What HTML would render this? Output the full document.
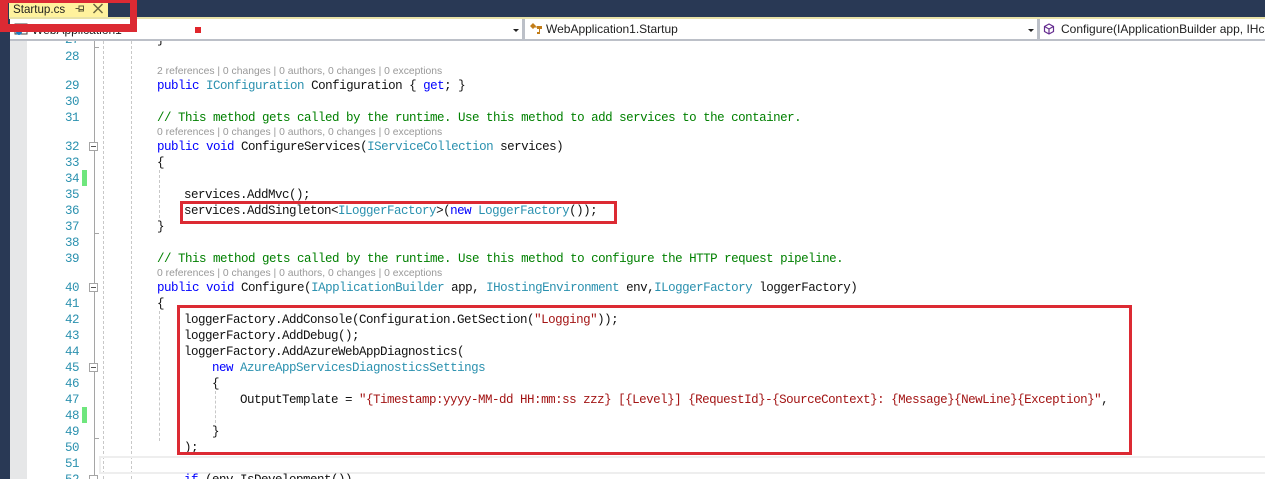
<!DOCTYPE html>
<html><head><meta charset="utf-8">
<style>
html,body{margin:0;padding:0;background:#fff}
#p{position:relative;width:1265px;height:479px;overflow:hidden;background:#fff;font-family:"Liberation Sans",sans-serif}
#p div{position:absolute}
.c{left:0;margin-top:1px;font:12.5px/16px "Liberation Mono",monospace;letter-spacing:-.5px;white-space:pre;color:#111;height:16px}
.n{left:40px;margin-top:1px;width:39px;text-align:right;font:12.5px/16px "Liberation Mono",monospace;letter-spacing:-.5px;color:#2b91af;height:16px}
.l{left:157px;margin-top:1px;font:10.35px/12px "Liberation Sans",sans-serif;color:#999;white-space:pre}
.k{color:#0000ff}.t{color:#2b91af}.g{color:#008000}.s{color:#a31515}
.v{width:0;border-left:1px dashed #c8c8c8}
.r{border:3px solid #dc2a33;box-sizing:border-box}
.f{width:9px;height:9px;left:89px;border:1px solid #a5a5a5;background:#fff;box-sizing:border-box}
.f:after{content:"";position:absolute;left:1px;top:3px;width:5px;height:1px;background:#555}
.h{left:95px;width:4px;height:1px;background:#a5a5a5}
.nv{font:12px/20px "Liberation Sans",sans-serif;color:#1e1e1e;white-space:pre;top:19px}
</style></head><body><div id="p">
<div style="left:10px;top:41px;width:17px;height:438px;background:#e6e7e8"></div>

<div style="left:94px;top:41px;width:1px;height:438px;background:#a5a5a5"></div>
<div class="v" style="left:103px;top:41px;height:438px"></div>
<div class="v" style="left:131px;top:41px;height:438px"></div>
<div class="v" style="left:159px;top:170px;height:48px"></div>
<div class="v" style="left:159px;top:311px;height:130px"></div>
<div class="v" style="left:215px;top:391px;height:32px"></div>
<div class="h" style="top:47px"></div>
<div class="h" style="top:233px"></div>
<div class="h" style="top:438px"></div>
<div class="f" style="top:142px"></div><div class="f" style="top:283px"></div><div class="f" style="top:475px"></div><div class="f" style="top:363px"></div>
<div style="left:82px;top:170px;width:5px;height:16px;background:#6fe67d"></div>
<div style="left:82px;top:407px;width:5px;height:16px;background:#6fe67d"></div>
<div style="left:99px;top:456px;width:1166px;height:14px;border:2px solid #eeeeee;border-right:0"></div>

<div class="n" style="top:31px">27</div><div class="n" style="top:48px">28</div>
<div class="n" style="top:77px">29</div><div class="n" style="top:93px">30</div><div class="n" style="top:109px">31</div>
<div class="n" style="top:138px">32</div><div class="n" style="top:154px">33</div><div class="n" style="top:170px">34</div><div class="n" style="top:186px">35</div><div class="n" style="top:202px">36</div><div class="n" style="top:218px">37</div><div class="n" style="top:234px">38</div><div class="n" style="top:250px">39</div>
<div class="n" style="top:279px">40</div><div class="n" style="top:295px">41</div><div class="n" style="top:311px">42</div><div class="n" style="top:327px">43</div><div class="n" style="top:343px">44</div><div class="n" style="top:359px">45</div><div class="n" style="top:375px">46</div><div class="n" style="top:391px">47</div><div class="n" style="top:407px">48</div><div class="n" style="top:423px">49</div><div class="n" style="top:439px">50</div><div class="n" style="top:455px">51</div><div class="n" style="top:471px">52</div>

<div class="c" style="left:157px;top:31px">}</div>
<div class="l" style="top:65px">2 references | 0 changes | 0 authors, 0 changes | 0 exceptions</div>
<div class="c" style="left:157px;top:77px"><span class="k">public</span> <span class="t">IConfiguration</span> Configuration { <span class="k">get</span>; }</div>
<div class="c g" style="left:157px;top:109px">// This method gets called by the runtime. Use this method to add services to the container.</div>
<div class="l" style="top:126px">0 references | 0 changes | 0 authors, 0 changes | 0 exceptions</div>
<div class="c" style="left:157px;top:138px"><span class="k">public</span> <span class="k">void</span> ConfigureServices(<span class="t">IServiceCollection</span> services)</div>
<div class="c" style="left:157px;top:154px">{</div>
<div class="c" style="left:184px;top:186px">services.AddMvc();</div>
<div class="c" style="left:184px;top:202px">services.AddSingleton&lt;<span class="t">ILoggerFactory</span>&gt;(<span class="k">new</span> <span class="t">LoggerFactory</span>());</div>
<div class="c" style="left:157px;top:218px">}</div>
<div class="c g" style="left:157px;top:250px">// This method gets called by the runtime. Use this method to configure the HTTP request pipeline.</div>
<div class="l" style="top:267px">0 references | 0 changes | 0 authors, 0 changes | 0 exceptions</div>
<div class="c" style="left:157px;top:279px"><span class="k">public</span> <span class="k">void</span> Configure(<span class="t">IApplicationBuilder</span> app, <span class="t">IHostingEnvironment</span> env,<span class="t">ILoggerFactory</span> loggerFactory)</div>
<div class="c" style="left:157px;top:295px">{</div>
<div class="c" style="left:184px;top:311px">loggerFactory.AddConsole(Configuration.GetSection(<span class="s">"Logging"</span>));</div>
<div class="c" style="left:184px;top:327px">loggerFactory.AddDebug();</div>
<div class="c" style="left:184px;top:343px">loggerFactory.AddAzureWebAppDiagnostics(</div>
<div class="c" style="left:212px;top:359px"><span class="k">new</span> <span class="t">AzureAppServicesDiagnosticsSettings</span></div>
<div class="c" style="left:212px;top:375px">{</div>
<div class="c" style="left:240px;top:391px">OutputTemplate = <span class="s">"{Timestamp:yyyy-MM-dd HH:mm:ss zzz} [{Level}] {RequestId}-{SourceContext}: {Message}{NewLine}{Exception}"</span>,</div>
<div class="c" style="left:212px;top:423px">}</div>
<div class="c" style="left:184px;top:439px">);</div>
<div class="c" style="left:184px;top:471px"><span class="k">if</span> (env.IsDevelopment())</div>

<div style="left:0;top:0;width:1265px;height:17px;background:#293955"></div>
<div style="left:0;top:0;width:10px;height:479px;background:#293955"></div>
<div style="left:9px;top:0;width:99px;height:17px;background:#fff29d"></div>
<div style="left:9px;top:17px;width:1256px;height:2px;background:#e8e2a8"></div>
<div style="left:10px;top:19px;width:1255px;height:20px;background:#fff"></div>
<div style="left:10px;top:39px;width:1255px;height:2px;background:#bcc0c8"></div>
<div style="left:13px;top:1px;font:11.6px/17px 'Liberation Sans',sans-serif;color:#1e1e1e">Startup.cs</div>
<svg style="position:absolute;left:74px;top:2px" width="34" height="14" viewBox="0 0 34 14"><path d="M1.500 6.500h3.500M5 3.500v6.500M5 4h4.500v5H5M5 7.500h4.500" fill="none" stroke="#5e5a36"/><path d="M19.500 2l9 9M28.500 2l-9 9" fill="none" stroke="#6a6540" stroke-width="1.500"/></svg>
<svg style="position:absolute;left:14px;top:23px" width="15" height="14" viewBox="0 0 15 14"><rect x="1" y="1" width="12" height="10" fill="#fff" stroke="#444"/><rect x="1" y="1" width="12" height="2" fill="#444"/><circle cx="5" cy="9" r="3" fill="#1c7cc0"/></svg>
<div class="nv" style="left:32px;top:20px">WebApplication1</div>
<div style="left:195px;top:27px;width:6px;height:6px;background:#e0252b"></div>
<div style="left:513px;top:29px;width:0;height:0;border:3px solid transparent;border-top:3px solid #222;border-bottom:0"></div>
<div style="left:522px;top:19px;width:3px;height:20px;background:#bcc0c8"></div>
<svg style="position:absolute;left:529px;top:22px" width="15" height="15" viewBox="0 0 15 15"><path d="M1 4l3-3 3 3-3 3zM8 4h5v3h-2v5H8v-2h2V7H8z" fill="#c27d1a"/><path d="M4 5h5" stroke="#c27d1a"/></svg>
<div class="nv" style="left:546px">WebApplication1.Startup</div>
<div style="left:1028px;top:29px;width:0;height:0;border:3px solid transparent;border-top:3px solid #222;border-bottom:0"></div>
<div style="left:1037px;top:19px;width:3px;height:20px;background:#bcc0c8"></div>
<svg style="position:absolute;left:1043px;top:23px" width="12" height="13" viewBox="0 0 12 13"><path d="M6 1l4.500 2.500v5L6 11 1.500 8.500v-5zM1.500 3.500L6 6l4.500-2.500M6 6v5" fill="none" stroke="#652d90" stroke-width="1.200"/></svg>
<div class="nv" style="left:1061px">Configure(IApplicationBuilder app, IHc</div>

<div class="r" style="left:180px;top:201px;width:437px;height:23px"></div>
<div class="r" style="left:177px;top:305px;width:955px;height:150px"></div>
<div class="r" style="left:0;top:0;width:137px;height:32px;border-width:3px 7px 8px 8px"></div>
</div></body></html>
